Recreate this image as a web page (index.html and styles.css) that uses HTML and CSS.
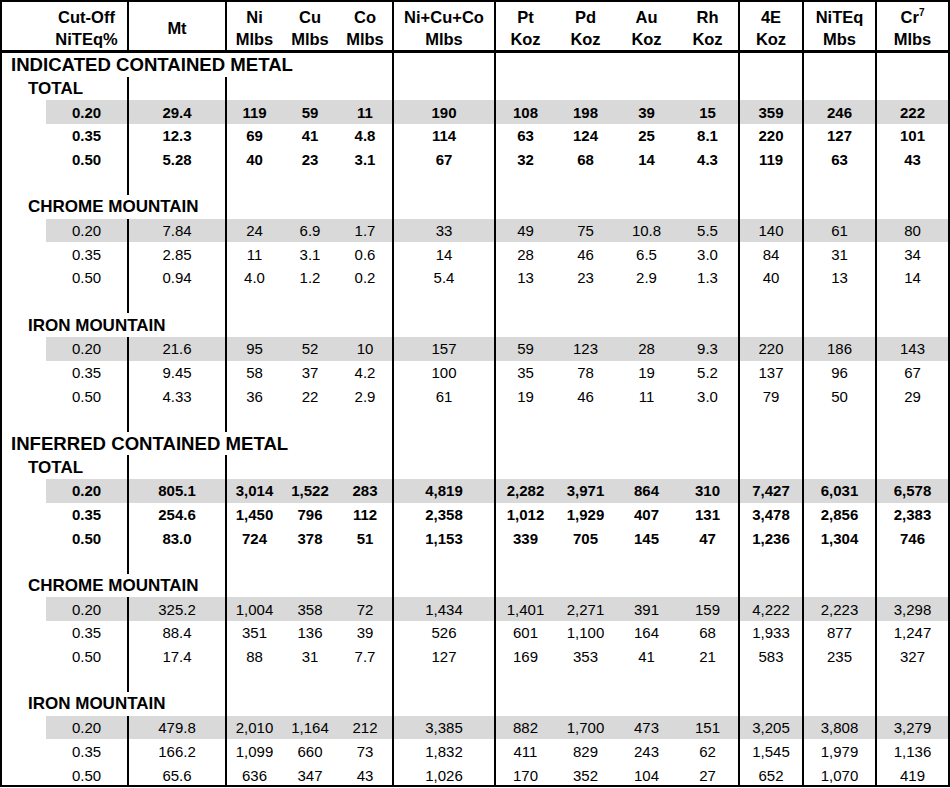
FILE: index.html
```html
<!DOCTYPE html>
<html lang="en">
<head>
<meta charset="utf-8">
<title>Contained Metal</title>
<link rel="stylesheet" href="styles.css">
</head>
<body>
<table class="grid">
<colgroup>
<col class="w-ind"><col class="w-cut"><col class="w-mt"><col class="w-ni"><col class="w-cu"><col class="w-co"><col class="w-sum"><col class="w-pgm"><col class="w-pgm"><col class="w-pgm"><col class="w-pgm"><col class="w-4e"><col class="w-eq"><col class="w-cr">
</colgroup>
<thead>
<tr class="head">
<th></th><th>Cut-Off<br>NiTEq%</th><th class="b">Mt</th><th class="b">Ni<br>Mlbs</th><th>Cu<br>Mlbs</th><th>Co<br>Mlbs</th><th class="b">Ni+Cu+Co<br>Mlbs</th><th class="b">Pt<br>Koz</th><th>Pd<br>Koz</th><th>Au<br>Koz</th><th>Rh<br>Koz</th><th class="b">4E<br>Koz</th><th class="b">NiTEq<br>Mbs</th><th class="b">Cr<sup class="sup">7</sup><br>Mlbs</th>
</tr>
</thead>
<tbody>
<tr><td colspan="6" class="sec">INDICATED CONTAINED METAL</td><td class="b"></td><td class="b"></td><td></td><td></td><td></td><td class="b"></td><td class="b"></td><td class="b"></td></tr>
<tr><td colspan="2" class="sub">TOTAL</td><td class="b"></td><td class="b"></td><td></td><td></td><td class="b"></td><td class="b"></td><td></td><td></td><td></td><td class="b"></td><td class="b"></td><td class="b"></td></tr>
<tr class="bold shade"><td class="ind"></td><td>0.20</td><td class="b">29.4</td><td class="b">119</td><td>59</td><td>11</td><td class="b">190</td><td class="b">108</td><td>198</td><td>39</td><td>15</td><td class="b">359</td><td class="b">246</td><td class="b">222</td></tr>
<tr class="bold"><td class="ind"></td><td>0.35</td><td class="b">12.3</td><td class="b">69</td><td>41</td><td>4.8</td><td class="b">114</td><td class="b">63</td><td>124</td><td>25</td><td>8.1</td><td class="b">220</td><td class="b">127</td><td class="b">101</td></tr>
<tr class="bold"><td class="ind"></td><td>0.50</td><td class="b">5.28</td><td class="b">40</td><td>23</td><td>3.1</td><td class="b">67</td><td class="b">32</td><td>68</td><td>14</td><td>4.3</td><td class="b">119</td><td class="b">63</td><td class="b">43</td></tr>
<tr><td colspan="2"></td><td class="b"></td><td class="b"></td><td></td><td></td><td class="b"></td><td class="b"></td><td></td><td></td><td></td><td class="b"></td><td class="b"></td><td class="b"></td></tr>
<tr><td colspan="3" class="mtn">CHROME MOUNTAIN</td><td class="b"></td><td></td><td></td><td class="b"></td><td class="b"></td><td></td><td></td><td></td><td class="b"></td><td class="b"></td><td class="b"></td></tr>
<tr class="shade"><td class="ind"></td><td>0.20</td><td class="b">7.84</td><td class="b">24</td><td>6.9</td><td>1.7</td><td class="b">33</td><td class="b">49</td><td>75</td><td>10.8</td><td>5.5</td><td class="b">140</td><td class="b">61</td><td class="b">80</td></tr>
<tr><td class="ind"></td><td>0.35</td><td class="b">2.85</td><td class="b">11</td><td>3.1</td><td>0.6</td><td class="b">14</td><td class="b">28</td><td>46</td><td>6.5</td><td>3.0</td><td class="b">84</td><td class="b">31</td><td class="b">34</td></tr>
<tr><td class="ind"></td><td>0.50</td><td class="b">0.94</td><td class="b">4.0</td><td>1.2</td><td>0.2</td><td class="b">5.4</td><td class="b">13</td><td>23</td><td>2.9</td><td>1.3</td><td class="b">40</td><td class="b">13</td><td class="b">14</td></tr>
<tr><td colspan="2"></td><td class="b"></td><td class="b"></td><td></td><td></td><td class="b"></td><td class="b"></td><td></td><td></td><td></td><td class="b"></td><td class="b"></td><td class="b"></td></tr>
<tr><td colspan="3" class="mtn">IRON MOUNTAIN</td><td class="b"></td><td></td><td></td><td class="b"></td><td class="b"></td><td></td><td></td><td></td><td class="b"></td><td class="b"></td><td class="b"></td></tr>
<tr class="shade"><td class="ind"></td><td>0.20</td><td class="b">21.6</td><td class="b">95</td><td>52</td><td>10</td><td class="b">157</td><td class="b">59</td><td>123</td><td>28</td><td>9.3</td><td class="b">220</td><td class="b">186</td><td class="b">143</td></tr>
<tr><td class="ind"></td><td>0.35</td><td class="b">9.45</td><td class="b">58</td><td>37</td><td>4.2</td><td class="b">100</td><td class="b">35</td><td>78</td><td>19</td><td>5.2</td><td class="b">137</td><td class="b">96</td><td class="b">67</td></tr>
<tr><td class="ind"></td><td>0.50</td><td class="b">4.33</td><td class="b">36</td><td>22</td><td>2.9</td><td class="b">61</td><td class="b">19</td><td>46</td><td>11</td><td>3.0</td><td class="b">79</td><td class="b">50</td><td class="b">29</td></tr>
<tr><td colspan="2"></td><td class="b"></td><td class="b"></td><td></td><td></td><td class="b"></td><td class="b"></td><td></td><td></td><td></td><td class="b"></td><td class="b"></td><td class="b"></td></tr>
<tr><td colspan="6" class="sec">INFERRED CONTAINED METAL</td><td class="b"></td><td class="b"></td><td></td><td></td><td></td><td class="b"></td><td class="b"></td><td class="b"></td></tr>
<tr><td colspan="2" class="sub">TOTAL</td><td class="b"></td><td class="b"></td><td></td><td></td><td class="b"></td><td class="b"></td><td></td><td></td><td></td><td class="b"></td><td class="b"></td><td class="b"></td></tr>
<tr class="bold shade"><td class="ind"></td><td>0.20</td><td class="b">805.1</td><td class="b">3,014</td><td>1,522</td><td>283</td><td class="b">4,819</td><td class="b">2,282</td><td>3,971</td><td>864</td><td>310</td><td class="b">7,427</td><td class="b">6,031</td><td class="b">6,578</td></tr>
<tr class="bold"><td class="ind"></td><td>0.35</td><td class="b">254.6</td><td class="b">1,450</td><td>796</td><td>112</td><td class="b">2,358</td><td class="b">1,012</td><td>1,929</td><td>407</td><td>131</td><td class="b">3,478</td><td class="b">2,856</td><td class="b">2,383</td></tr>
<tr class="bold"><td class="ind"></td><td>0.50</td><td class="b">83.0</td><td class="b">724</td><td>378</td><td>51</td><td class="b">1,153</td><td class="b">339</td><td>705</td><td>145</td><td>47</td><td class="b">1,236</td><td class="b">1,304</td><td class="b">746</td></tr>
<tr><td colspan="2"></td><td class="b"></td><td class="b"></td><td></td><td></td><td class="b"></td><td class="b"></td><td></td><td></td><td></td><td class="b"></td><td class="b"></td><td class="b"></td></tr>
<tr><td colspan="3" class="mtn">CHROME MOUNTAIN</td><td class="b"></td><td></td><td></td><td class="b"></td><td class="b"></td><td></td><td></td><td></td><td class="b"></td><td class="b"></td><td class="b"></td></tr>
<tr class="shade"><td class="ind"></td><td>0.20</td><td class="b">325.2</td><td class="b">1,004</td><td>358</td><td>72</td><td class="b">1,434</td><td class="b">1,401</td><td>2,271</td><td>391</td><td>159</td><td class="b">4,222</td><td class="b">2,223</td><td class="b">3,298</td></tr>
<tr><td class="ind"></td><td>0.35</td><td class="b">88.4</td><td class="b">351</td><td>136</td><td>39</td><td class="b">526</td><td class="b">601</td><td>1,100</td><td>164</td><td>68</td><td class="b">1,933</td><td class="b">877</td><td class="b">1,247</td></tr>
<tr><td class="ind"></td><td>0.50</td><td class="b">17.4</td><td class="b">88</td><td>31</td><td>7.7</td><td class="b">127</td><td class="b">169</td><td>353</td><td>41</td><td>21</td><td class="b">583</td><td class="b">235</td><td class="b">327</td></tr>
<tr><td colspan="2"></td><td class="b"></td><td class="b"></td><td></td><td></td><td class="b"></td><td class="b"></td><td></td><td></td><td></td><td class="b"></td><td class="b"></td><td class="b"></td></tr>
<tr><td colspan="3" class="mtn">IRON MOUNTAIN</td><td class="b"></td><td></td><td></td><td class="b"></td><td class="b"></td><td></td><td></td><td></td><td class="b"></td><td class="b"></td><td class="b"></td></tr>
<tr class="shade"><td class="ind"></td><td>0.20</td><td class="b">479.8</td><td class="b">2,010</td><td>1,164</td><td>212</td><td class="b">3,385</td><td class="b">882</td><td>1,700</td><td>473</td><td>151</td><td class="b">3,205</td><td class="b">3,808</td><td class="b">3,279</td></tr>
<tr><td class="ind"></td><td>0.35</td><td class="b">166.2</td><td class="b">1,099</td><td>660</td><td>73</td><td class="b">1,832</td><td class="b">411</td><td>829</td><td>243</td><td>62</td><td class="b">1,545</td><td class="b">1,979</td><td class="b">1,136</td></tr>
<tr class="last"><td class="ind"></td><td>0.50</td><td class="b">65.6</td><td class="b">636</td><td>347</td><td>43</td><td class="b">1,026</td><td class="b">170</td><td>352</td><td>104</td><td>27</td><td class="b">652</td><td class="b">1,070</td><td class="b">419</td></tr>
</tbody>
</table>
</body>
</html>
```

FILE: styles.css
```css
html, body {
  margin: 0;
  padding: 0;
  background: #fff;
}
body {
  font-family: "Liberation Sans", Arial, sans-serif;
  color: #000;
}
.grid {
  width: 950px;
  table-layout: fixed;
  border-collapse: separate;
  border-spacing: 0;
  border: 2px solid #000;
  box-sizing: border-box;
}
.w-ind { width: 44px; }
.w-cut { width: 81px; }
.w-mt { width: 98px; }
.w-ni { width: 57px; }
.w-cu { width: 56px; }
.w-co { width: 54px; }
.w-sum { width: 102px; }
.w-pgm { width: 61px; }
.w-4e { width: 64px; }
.w-eq { width: 73px; }
.w-cr { width: 73px; }

.grid th,
.grid td {
  box-sizing: border-box;
  padding: 0;
  text-align: center;
  vertical-align: middle;
  white-space: nowrap;
}
.grid th {
  height: 51px;
  padding-top: 3px;
  font-size: 16.5px;
  line-height: 22px;
  font-weight: bold;
  border-bottom: 3px solid #000;
}
.grid td {
  height: 23.68px;
  font-size: 15px;
  line-height: 17px;
}
.grid .last td {
  height: 21.6px;
  padding-top: 3px;
}
.grid .b {
  border-left: 2px solid #000;
}
.sup {
  font-size: 10px;
  line-height: 0;
  vertical-align: 7px;
}
.grid .sec {
  text-align: left;
  padding-left: 9px;
  font-size: 18.6px;
  font-weight: bold;
}
.grid .sub {
  text-align: left;
  padding-left: 26px;
  font-size: 17px;
  font-weight: bold;
}
.grid .mtn {
  text-align: left;
  padding-left: 26px;
  font-size: 17px;
  font-weight: bold;
}
.bold td {
  font-weight: bold;
}
.shade td {
  background: #d9d9d9;
}
.shade td.ind {
  background: transparent;
}
```
